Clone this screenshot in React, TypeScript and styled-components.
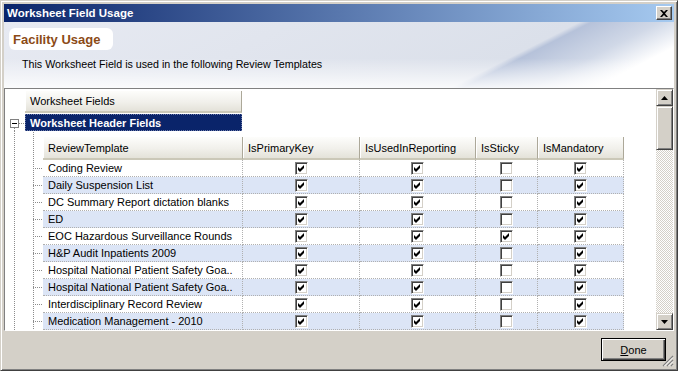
import React from 'react';
import styled, { createGlobalStyle } from 'styled-components';

const GlobalStyle = createGlobalStyle`
  html, body {
    margin: 0;
    padding: 0;
    background: #d4d0c8;
  }
  body {
    font-family: 'Liberation Sans', Arial, sans-serif;
    font-size: 11px;
    color: #000;
  }
  * {
    box-sizing: border-box;
  }
`;

const DOT = '#8c8c8c';
const dotsDown = `repeating-linear-gradient(to bottom, ${DOT} 0 1px, transparent 1px 2px)`;
const dotsRight = `repeating-linear-gradient(to right, ${DOT} 0 1px, transparent 1px 2px)`;

type Row = [string, boolean, boolean, boolean, boolean];

const rows: Row[] = [
  ['Coding Review', true, true, false, true],
  ['Daily Suspension List', true, true, false, true],
  ['DC Summary Report dictation blanks', true, true, false, true],
  ['ED', true, true, false, true],
  ['EOC Hazardous Surveillance Rounds', true, true, true, true],
  ['H&P Audit Inpatients 2009', true, true, false, true],
  ['Hospital National Patient Safety Goa..', true, true, false, true],
  ['Hospital National Patient Safety Goa..', true, true, false, true],
  ['Interdisciplinary Record Review', true, true, false, true],
  ['Medication Management - 2010', true, true, false, true],
];

const columns = [
  { label: 'ReviewTemplate', width: 200 },
  { label: 'IsPrimaryKey', width: 117 },
  { label: 'IsUsedInReporting', width: 116 },
  { label: 'IsSticky', width: 62 },
  { label: 'IsMandatory', width: 86 },
];

const Window = styled.div`
  width: 678px;
  height: 371px;
  display: flex;
  flex-direction: column;
  padding: 3px;
  background: #d4d0c8;
  border: 1px solid;
  border-color: #d4d0c8 #404040 #404040 #d4d0c8;
  box-shadow: inset 1px 1px #fff, inset -1px -1px #808080;
`;

const TitleBar = styled.div`
  flex: none;
  height: 18px;
  display: flex;
  align-items: center;
  justify-content: space-between;
  padding: 0 2px 0 3px;
  background: linear-gradient(to right, #0a246a, #a6caf0);
`;

const Title = styled.span`
  color: #fff;
  font-weight: bold;
  font-size: 11.5px;
`;

const CloseButton = styled.div`
  width: 16px;
  height: 14px;
  display: flex;
  align-items: center;
  justify-content: center;
  background: #d4d0c8;
  border: 1px solid;
  border-color: #fff #404040 #404040 #fff;
  box-shadow: inset -1px -1px #808080;
`;

const Header = styled.div`
  flex: none;
  height: 66px;
  padding: 6px 0 0 5px;
  background:
    linear-gradient(to bottom, rgba(255, 255, 255, 0) 55%, rgba(255, 255, 255, 0.85) 100%),
    linear-gradient(153deg, #e7eaf2 0%, #dbe0ea 72%, #b6c2da 73.5%, #d0d8e7 82%, #fff 90%);
`;

const SectionTab = styled.div`
  width: 104px;
  height: 22px;
  display: flex;
  align-items: center;
  padding-left: 4px;
  background: #fff;
  border-radius: 6px;
  color: #8b4a16;
  font-weight: bold;
  font-size: 13px;
`;

const Caption = styled.div`
  margin: 8px 0 0 13px;
  font-size: 10.7px;
`;

const GridFrame = styled.div`
  flex: none;
  height: 243px;
  display: flex;
  background: #fff;
  border: 1px solid;
  border-color: #808080 #fff #fff #808080;
`;

const GridContent = styled.div`
  flex: 1;
  display: flex;
  flex-direction: column;
  overflow: hidden;
`;

const BandRow = styled.div`
  flex: none;
  padding: 2px 0 0 20px;
`;

const HeaderCell = styled.div<{ $width: number }>`
  width: ${(p) => p.$width}px;
  height: ${(p) => (p.$width > 210 ? 22 : 23)}px;
  display: flex;
  align-items: center;
  padding-left: 5px;
  white-space: nowrap;
  background: linear-gradient(#fdfdfb, #f1f0eb 55%, #e4e2d9);
  border-right: 1px solid #aca899;
  border-bottom: 2px solid #cbc8b8;
  box-shadow: inset 1px 0 #fff;
`;

const GroupRow = styled.div`
  flex: none;
  height: 18px;
  display: flex;
`;

const ExpanderCell = styled.div`
  width: 20px;
  padding: 6px 0 0 5px;
  background:
    ${dotsRight} 14px 10px / 6px 1px no-repeat,
    ${dotsDown} 9px 15px / 1px 3px no-repeat;
`;

const Expander = styled.div`
  width: 9px;
  height: 9px;
  display: flex;
  align-items: center;
  justify-content: center;
  background: #fff;
  border: 1px solid #808080;

  &::before {
    content: '';
    width: 5px;
    height: 1px;
    background: #000;
  }
`;

const GroupLabel = styled.div`
  width: 217px;
  height: 17px;
  margin-top: 1px;
  display: flex;
  align-items: center;
  padding-left: 5px;
  background: #0a246a;
  color: #fff;
  font-weight: bold;
  outline: 1px dotted #6c7aa8;
  outline-offset: -1px;
`;

const ChildArea = styled.div`
  flex: 1;
  display: flex;
  padding-left: 28px;
  background: ${dotsDown} 9px 0 / 1px 100% repeat-y;
`;

const ChildTable = styled.div`
  display: flex;
  flex-direction: column;
  padding-top: 6px;
  background: ${dotsDown} 0 1px / 1px 100% no-repeat;
`;

const TableRow = styled.div`
  display: flex;
`;

const Tick = styled.div`
  width: 10px;
  flex: none;
  background: ${dotsRight} 0 8px / 10px 1px no-repeat;
`;

const Spacer = styled.div`
  width: 10px;
  flex: none;
`;

const Cell = styled.div<{ $width: number; $alt: boolean; $center?: boolean }>`
  width: ${(p) => p.$width}px;
  height: 17px;
  display: flex;
  align-items: center;
  justify-content: ${(p) => (p.$center ? 'center' : 'flex-start')};
  padding-left: ${(p) => (p.$center ? 0 : 5)}px;
  white-space: nowrap;
  overflow: hidden;
  background: ${(p) => (p.$alt ? '#dce5f6' : '#fff')};
  border-right: 1px dotted #b0b0b0;
  border-bottom: 1px dotted #b0b0b0;
`;

const CheckBox = styled.span`
  width: 13px;
  height: 13px;
  display: flex;
  align-items: center;
  justify-content: center;
  background: #fff;
  border: 1px solid;
  border-color: #808080 #fff #fff #808080;
  box-shadow: inset 1px 1px #404040, inset -1px -1px #d4d0c8;
`;

const ScrollBar = styled.div`
  width: 17px;
  flex: none;
  display: flex;
  flex-direction: column;
`;

const ScrollPart = styled.div<{ $size: number }>`
  height: ${(p) => p.$size}px;
  flex: none;
  display: flex;
  align-items: center;
  justify-content: center;
  background: #d4d0c8;
  border: 1px solid;
  border-color: #d4d0c8 #404040 #404040 #d4d0c8;
  box-shadow: inset 1px 1px #fff, inset -1px -1px #808080;
`;

const ScrollTrack = styled.div`
  flex: 1;
  background: repeating-conic-gradient(#fff 0 25%, #d4d0c8 0 50%) 0 0 / 2px 2px;
`;

const Footer = styled.div`
  flex: 1;
  position: relative;
  display: flex;
  align-items: flex-start;
  justify-content: flex-end;
  padding: 7px 8px 0 0;
`;

const DoneButton = styled.div`
  width: 65px;
  height: 23px;
  display: flex;
  align-items: center;
  justify-content: center;
  background: #d4d0c8;
  border: 1px solid #000;
  box-shadow: inset 1px 1px #fff, inset -1px -1px #404040, inset -2px -2px #808080;
  font-size: 11px;

  u {
    text-decoration: underline;
  }
`;

const Grip = styled.svg`
  position: absolute;
  right: 0;
  bottom: 0;
`;

const Check = () => (
  <svg width="7" height="7" viewBox="0 0 7 7">
    <path d="M0 2 L2 4 L6 0 L6 3 L2 7 L0 5 Z" fill="#000" />
  </svg>
);

const Arrow = ({ down }: { down?: boolean }) => (
  <svg width="7" height="4" viewBox="0 0 7 4">
    <path d={down ? 'M0 0 H7 L3.5 4 Z' : 'M0 4 H7 L3.5 0 Z'} fill="#000" />
  </svg>
);

const App = (): React.ReactElement => {
  return (
    <>
      <GlobalStyle />
      <Window>
        <TitleBar>
          <Title>Worksheet Field Usage</Title>
          <CloseButton>
            <svg width="8" height="7" viewBox="0 0 8 7">
              <path d="M0 0h2l2 2 2-2h2L5 3.5 8 7H6L4 5 2 7H0l3-3.5z" fill="#000" />
            </svg>
          </CloseButton>
        </TitleBar>
        <Header>
          <SectionTab>Facility Usage</SectionTab>
          <Caption>This Worksheet Field is used in the following Review Templates</Caption>
        </Header>
        <GridFrame>
          <GridContent>
            <BandRow>
              <HeaderCell $width={217}>Worksheet Fields</HeaderCell>
            </BandRow>
            <GroupRow>
              <ExpanderCell>
                <Expander />
              </ExpanderCell>
              <GroupLabel>Worksheet Header Fields</GroupLabel>
            </GroupRow>
            <ChildArea>
              <ChildTable>
                <TableRow>
                  <Spacer />
                  {columns.map((c) => (
                    <HeaderCell key={c.label} $width={c.width}>
                      {c.label}
                    </HeaderCell>
                  ))}
                </TableRow>
                {rows.map(([name, ...flags], i) => (
                  <TableRow key={i}>
                    <Tick />
                    <Cell $width={columns[0].width} $alt={i % 2 === 1}>
                      {name}
                    </Cell>
                    {flags.map((on, j) => (
                      <Cell key={j} $width={columns[j + 1].width} $alt={i % 2 === 1} $center>
                        <CheckBox>{on && <Check />}</CheckBox>
                      </Cell>
                    ))}
                  </TableRow>
                ))}
              </ChildTable>
            </ChildArea>
          </GridContent>
          <ScrollBar>
            <ScrollPart $size={17}>
              <Arrow />
            </ScrollPart>
            <ScrollPart $size={44} />
            <ScrollTrack />
            <ScrollPart $size={17}>
              <Arrow down />
            </ScrollPart>
          </ScrollBar>
        </GridFrame>
        <Footer>
          <DoneButton>
            <span>
              <u>D</u>one
            </span>
          </DoneButton>
          <Grip width="12" height="12" viewBox="0 0 12 12">
            <path d="M11 1 L1 11 M11 5 L5 11 M11 9 L9 11" stroke="#808080" strokeWidth="1.2" />
            <path d="M11 2.5 L2.5 11 M11 6.5 L6.5 11 M11 10.5 L10.5 11" stroke="#fff" strokeWidth="1" />
          </Grip>
        </Footer>
      </Window>
    </>
  );
};

export default App;
